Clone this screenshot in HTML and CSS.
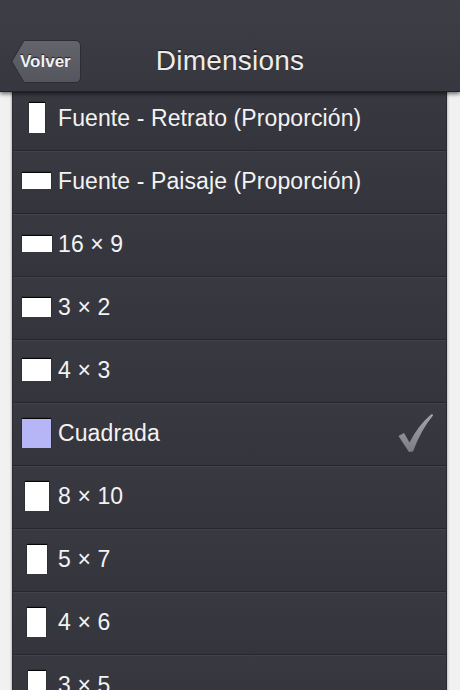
FILE: index.html
```html
<!DOCTYPE html>
<html lang="es">
<head>
<meta charset="utf-8">
<title>Dimensions</title>
<link rel="stylesheet" href="styles.css">
</head>
<body>
<header class="navbar">
  <a class="back">
    <svg class="back-shape" width="70" height="43" viewBox="0 0 70 43">
      <defs>
        <linearGradient id="bg" x1="0" y1="0" x2="0" y2="1">
          <stop offset="0" stop-color="#64646c"/>
          <stop offset="1" stop-color="#55555d"/>
        </linearGradient>
      </defs>
      <path d="M13 0.5 H64 Q69.5 0.5 69.5 6 V37 Q69.5 42.5 64 42.5 H13 L0.8 21.5 Z" fill="url(#bg)" stroke="#2c2c32" stroke-width="1"/>
    </svg>
    <span class="back-label">Volver</span>
  </a>
  <h1 class="title">Dimensions</h1>
</header>
<ul class="list">
  <li class="row"><span class="icon"><span class="shape" style="width:16px;height:30px"></span></span><span class="label">Fuente - Retrato (Proporción)</span></li>
  <li class="row"><span class="icon"><span class="shape" style="width:29px;height:16px"></span></span><span class="label">Fuente - Paisaje (Proporción)</span></li>
  <li class="row"><span class="icon"><span class="shape" style="width:30px;height:16px"></span></span><span class="label">16 × 9</span></li>
  <li class="row"><span class="icon"><span class="shape" style="width:29px;height:19px"></span></span><span class="label">3 × 2</span></li>
  <li class="row"><span class="icon"><span class="shape" style="width:29px;height:22px"></span></span><span class="label">4 × 3</span></li>
  <li class="row selected"><span class="icon"><span class="shape square" style="width:29px;height:29px"></span></span><span class="label">Cuadrada</span>
    <svg class="check" width="36" height="40" viewBox="0 0 36 40">
      <defs>
        <linearGradient id="ck" x1="0" y1="0" x2="0" y2="1">
          <stop offset="0" stop-color="#a4a4ac"/>
          <stop offset="1" stop-color="#7c7c84"/>
        </linearGradient>
      </defs>
      <path d="M0.5 23 L6 20 L11.5 29.5 Q20 12.5 33 1.5 Q35 0.5 35 2.5 Q23.5 16 15 38.5 L11 39 Z" fill="url(#ck)"/>
    </svg>
  </li>
  <li class="row"><span class="icon"><span class="shape" style="width:24px;height:29px"></span></span><span class="label">8 × 10</span></li>
  <li class="row"><span class="icon"><span class="shape" style="width:20px;height:29px"></span></span><span class="label">5 × 7</span></li>
  <li class="row"><span class="icon"><span class="shape" style="width:19px;height:29px"></span></span><span class="label">4 × 6</span></li>
  <li class="row"><span class="icon"><span class="shape" style="width:18px;height:29px"></span></span><span class="label">3 × 5</span></li>
</ul>
</body>
</html>
```
FILE: styles.css
```css
* { box-sizing: border-box; }
html, body { margin: 0; padding: 0; }
body {
  width: 460px;
  height: 690px;
  overflow: hidden;
  background: #f1f1f1;
  font-family: "Liberation Sans", Arial, sans-serif;
}
.navbar {
  position: relative;
  z-index: 2;
  height: 92px;
  background: linear-gradient(#3e3e46, #37373f);
  border-bottom: 1px solid #222227;
  box-shadow: 0 2px 4px rgba(0,0,0,0.55);
  display: flex;
  align-items: flex-end;
  justify-content: center;
  padding-bottom: 14px;
}
.back {
  position: absolute;
  left: 11px;
  top: 40px;
  width: 70px;
  height: 43px;
  display: flex;
  align-items: center;
  padding-left: 9px;
}
.back-shape {
  position: absolute;
  left: 0;
  top: 0;
}
.back-label {
  position: relative;
  color: #f2f2f2;
  font-weight: bold;
  font-size: 17px;
  text-shadow: 0 -1px 1px rgba(0,0,0,0.7);
}
.title {
  margin: 0;
  font-weight: normal;
  font-size: 28px;
  color: #ececec;
  text-shadow: 0 -1px 1px rgba(0,0,0,0.5);
  letter-spacing: 0.2px;
}
.list {
  list-style: none;
  margin: -4px 13px 0 12px;
  padding: 0;
  background: #37373f;
  border-left: 1px solid #2a2a30;
  border-right: 1px solid #2a2a30;
  box-shadow: 1px 0 2px rgba(0,0,0,0.2), -1px 0 2px rgba(0,0,0,0.2);
}
.row {
  height: 63px;
  display: flex;
  align-items: center;
  padding-left: 8px;
  padding-bottom: 2px;
  border-bottom: 1px solid #26262c;
  box-shadow: inset 0 1px 0 #42424a;
  background: linear-gradient(#393941, #34343c);
}
.icon {
  width: 31px;
  height: 31px;
  display: flex;
  align-items: center;
  justify-content: center;
  margin-right: 6px;
  flex: none;
}
.shape {
  display: block;
  background: #ffffff;
  box-shadow: 0 -1px 1px rgba(0,0,0,0.9);
}
.shape.square {
  background: #b6b6f6;
}
.label {
  color: #f3f3f3;
  font-size: 23px;
  letter-spacing: 0.1px;
  flex: 1;
}
.check {
  margin-right: 12px;
  flex: none;
}
```
